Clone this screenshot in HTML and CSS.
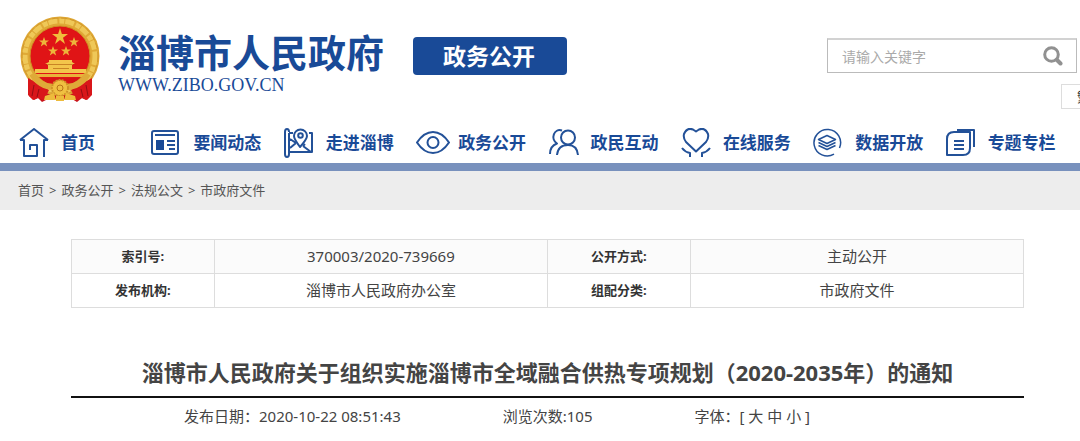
FILE: index.html
```html
<!DOCTYPE html>
<html lang="zh-CN">
<head>
    <meta charset="UTF-8">
    <meta name="viewport" content="width=device-width, initial-scale=1.0">
    <title>淄博市人民政府</title>
    <link rel="stylesheet" href="styles.css">
</head>
<body>

    <header class="header">
        <a class="logo" href="#">
            <svg class="emblem" viewBox="0 0 80 86" aria-hidden="true">
                <path fill="#c9141a" d="M11 62 L9 80 L14 84 L18 82 L22 86 L28 83 L52 83 L57 86 L62 82 L66 84 L71 79 L69 62Z"/>
                <circle cx="40" cy="40" r="34.500" fill="none" stroke="#dfa936" stroke-width="10"/>
                <circle cx="40" cy="40" r="35" fill="none" stroke="#efc858" stroke-width="5" stroke-dasharray="9 2 5 1"/>
                <circle cx="40" cy="40" r="38" fill="none" stroke="#d3982d" stroke-width="1" stroke-dasharray="6 3"/>
                <circle cx="40" cy="40" r="30" fill="#e01416" stroke="#cf9023" stroke-width="1"/>
                <path fill="#f0bd3c" d="M40 12 L41.900 18 L48 18 L43 21.700 L45 28 L40 24 L35 28 L37 21.700 L32 18 L38.100 18Z"/>
                <g fill="#edb53a">
                    <path id="star" d="M24 21 L25.300 24.500 L29 24.500 L26 26.700 L27.200 30.500 L24 28.200 L20.800 30.500 L22 26.700 L19 24.500 L22.700 24.500Z"/>
                    <use href="#star" x="30"/>
                    <use href="#star" x="9" y="9"/>
                    <use href="#star" x="22" y="9"/>
                </g>
                <path fill="#f3c54b" d="M29 44 H52 V46 L55 48 H52 V53 H66 V57 H15 V53 H28 V48 H25 L29 46Z"/>
                <path stroke="#c98425" d="M27 48.500 H53 M33 52.500 H49"/>
                <path fill="#e9b23a" d="M15 58 H65 L62 61 H18Z"/>
                <path fill="#d81316" d="M20 62 H60 L52 68 H28Z"/>
                <path fill="#d9161a" d="M8 62 L29 74 L24 84 L18 82 L13 84 L8 79Z M72 62 L51 74 L56 84 L62 82 L67 84 L72 79Z"/>
                <path fill="none" stroke="#dfaa38" stroke-width="6" d="M12 58 Q20 71 34 71 M68 58 Q60 71 46 71"/>
                <circle cx="40" cy="72" r="8" fill="#f0c041" stroke="#cf9428" stroke-width="2" stroke-dasharray="2 1"/>
                <circle cx="40" cy="72" r="3" fill="none" stroke="#b87518"/>
                <path fill="#edbb3c" d="M25 80 L34 77 L36 84 H24Z M55 80 L46 77 L44 84 H56Z M36 80 H44 V85 H36Z"/>
                <path fill="none" stroke="#920e13" d="M14 69 L12 80 M19 73 L17 81 M61 73 L63 81 M66 69 L68 80"/>
            </svg>
            <span class="logo-text">
                <span class="site-name">淄博市人民政府</span>
                <span class="site-url">WWW.ZIBO.GOV.CN</span>
            </span>
        </a>
        <a class="channel" href="#">政务公开</a>
        <div class="header-right">
            <form class="search">
                <input type="text" placeholder="请输入关键字" aria-label="请输入关键字">
                <button type="button" aria-label="搜索">
                    <svg viewBox="0 0 20 20" fill="none" stroke="#919191" stroke-width="3">
                        <circle cx="8.500" cy="8.500" r="6.800"/>
                        <path stroke-width="4" stroke-linecap="round" d="M14 14 L17.500 17.500"/>
                    </svg>
                </button>
            </form>
            <button class="lang" type="button">繁</button>
        </div>
    </header>

    <nav class="nav">
        <a href="#">
            <svg viewBox="0 0 34 30">
                <path d="M1 12 L15 1 L29 12 M1 12 H5 V28 H18 V17 H11 V22 M29 12 H25 V29"/>
            </svg>
            首页
        </a>
        <a href="#">
            <svg viewBox="0 0 34 30">
                <rect x="1" y="3" width="26" height="23" rx="2"/>
                <path d="M4 7 H24 M16 13 H24 M16 17 H24 M18 21 H24"/>
                <rect class="solid" x="5" y="12" width="8" height="10"/>
            </svg>
            要闻动态
        </a>
        <a href="#">
            <svg viewBox="0 0 34 30">
                <path d="M5 5 V26 Q5 29 3 29 Q1 29 1 26 V4 Q1 1 3 1 Q5 1 5 4 M5 24 H28 V5 H25 M5 5 H9 M6 11 L12 15 M6 20 L12 15 M19 18 L27 24 M21 16 L19 18"/>
                <path d="M16 19 Q10 11 10 8 A6 6 0 0 1 23 8 Q23 11 16 19Z"/>
                <circle cx="16.500" cy="7.500" r="2.300"/>
            </svg>
            走进淄博
        </a>
        <a href="#">
            <svg viewBox="0 0 34 30">
                <path d="M1 14.500 Q8 4 17 4 Q26 4 33 14.500 Q26 25 17 25 Q8 25 1 14.500Z"/>
                <circle cx="17" cy="14.500" r="5.500"/>
            </svg>
            政务公开
        </a>
        <a href="#">
            <svg viewBox="0 0 34 30">
                <circle cx="19" cy="9.500" r="7"/>
                <path d="M8 27 Q9 17 19 17 Q28 17 29 27 M13 2.500 C5 0 1 11 8 15.500 Q1 18 1 26"/>
            </svg>
            政民互动
        </a>
        <a href="#">
            <svg viewBox="0 0 34 30">
                <path d="M15 23.500 L5 14 Q2 10 3 6 Q6 -1 12 1.500 L15 3.500 L18 1.500 Q24 -1 27 6 Q28 10 25 14Z"/>
                <path d="M1 20 Q4 24 9 25 V29 M29 20 Q26 24 21 25 V29"/>
            </svg>
            在线服务
        </a>
        <a href="#">
            <svg class="thin" viewBox="0 0 34 30">
                <path d="M26.500 20 A13.300 13.300 0 1 0 21 26.200"/>
                <path d="M14 7.500 L22.500 11.500 L14 15.500 L5.500 11.500Z M5.500 14.500 L14 18.500 L22.500 14.500 M5.500 17.500 L14 21.500 L22.500 17.500"/>
            </svg>
            数据开放
        </a>
        <a href="#">
            <svg viewBox="0 0 34 30">
                <path d="M8 4 H24 V20 Q24 27 17 27 H1 V11 Q1 4 8 4Z M11 2 H28 V19 M8 13 H18 M8 17 H18 M8 21 H18"/>
            </svg>
            专题专栏
        </a>
    </nav>

    <div class="crumbs">
        <a href="#">首页</a>
        <span>&gt;</span>
        <a href="#">政务公开</a>
        <span>&gt;</span>
        <a href="#">法规公文</a>
        <span>&gt;</span>
        <a href="#">市政府文件</a>
    </div>

    <main class="content">
        <table class="info">
            <tr>
                <th scope="row">索引号:</th>
                <td>370003/2020-739669</td>
                <th scope="row">公开方式:</th>
                <td>主动公开</td>
            </tr>
            <tr>
                <th scope="row">发布机构:</th>
                <td>淄博市人民政府办公室</td>
                <th scope="row">组配分类:</th>
                <td>市政府文件</td>
            </tr>
        </table>

        <h1>淄博市人民政府关于组织实施淄博市全域融合供热专项规划（2020-2035年）的通知</h1>

        <div class="meta">
            <span>发布日期：2020-10-22 08:51:43</span>
            <span>浏览次数:105</span>
            <span>字体：[ <a href="#">大</a> <a href="#">中</a> <a href="#">小</a> ]</span>
        </div>
    </main>

</body>
</html>
```
FILE: styles.css
```css
* {
    box-sizing: border-box;
}
body {
    margin: 0;
    font-family: "Noto Sans", "Noto Sans CJK SC", sans-serif;
    font-size: 15px;
    color: #444;
    background: #fff;
    overflow-x: hidden;
}
a {
    color: inherit;
    text-decoration: none;
}
.header {
    display: flex;
    align-items: flex-start;
    height: 120px;
    padding: 16px 3px 0 20px;
}
.logo {
    display: flex;
    gap: 18px;
    color: #194a97;
}
.emblem {
    width: 80px;
    height: 86px;
}
.logo-text {
    display: flex;
    flex-direction: column;
    width: 266px;
    padding-top: 13px;
}
.site-name {
    font-size: 38px;
    line-height: 46px;
    font-weight: bold;
}
.site-url {
    font-family: "Liberation Serif", serif;
    font-size: 18px;
    line-height: 20px;
}
.channel {
    width: 154px;
    margin: 21px 0 0 29px;
    padding-right: 2px;
    border-radius: 4px;
    background: #194a97;
    color: #fff;
    font-size: 23px;
    line-height: 38px;
    font-weight: bold;
    text-align: center;
}
.header-right {
    display: flex;
    flex-direction: column;
    align-items: flex-end;
    margin: 22px 0 0 auto;
}
.search {
    display: flex;
    align-items: center;
    width: 250px;
    height: 35px;
    border: 1px solid #bbb;
    border-top: 2px solid #d2d2d2;
}
.search input {
    flex: 1;
    min-width: 0;
    padding: 0 0 0 14px;
    border: none;
    outline: none;
    background: none;
    font-family: inherit;
    font-size: 14px;
}
.search input::placeholder {
    color: #aaa;
}
.search button {
    display: flex;
    padding: 0 13px;
    border: none;
    background: none;
    cursor: pointer;
}
.search svg {
    width: 20px;
    height: 20px;
}
.lang {
    height: 25px;
    margin: 11px -29px 0 0;
    padding: 0 15px;
    border: 1px solid #ddd;
    background: #fff;
    color: #333;
    font-family: inherit;
    font-size: 13px;
}
.nav {
    display: grid;
    grid-template-columns: repeat(8, 1fr);
    padding: 8px 2px 5px 19px;
    border-bottom: 8px solid #7891bd;
}
.nav a {
    display: flex;
    align-items: center;
    gap: 8px;
    color: #194a97;
    font-size: 17px;
    line-height: 30px;
    font-weight: bold;
    white-space: nowrap;
}
.nav svg {
    flex: none;
    width: 34px;
    height: 30px;
    fill: none;
    stroke: #235198;
    stroke-width: 2;
    stroke-linejoin: round;
}
.nav .thin {
    stroke-width: 1.5;
}
.nav .solid {
    fill: #194a97;
    stroke: none;
}
.crumbs {
    display: flex;
    gap: 5px;
    padding: 0 18px;
    background: #ededed;
    color: #555;
    font-size: 13px;
    line-height: 39px;
}
.content {
    margin: 29px 56px 0 71px;
}
.info {
    width: 100%;
    table-layout: fixed;
    border-collapse: collapse;
}
.info th,
.info td {
    height: 34px;
    padding: 0 0 2px;
    border: 1px solid #ddd;
    line-height: 24px;
    text-align: center;
}
.info th {
    width: 15%;
    color: #333;
    font-size: 13px;
}
.info td {
    width: 35%;
}
.info tr:first-child {
    background: #fbfbfb;
}
h1 {
    margin: 48px 0 0;
    padding-bottom: 8px;
    border-bottom: 2px solid #111;
    font-size: 22px;
    line-height: 32px;
    text-align: center;
}
.meta {
    display: flex;
    gap: 102px;
    padding: 6px 0 12px 113px;
    line-height: 24px;
}
```
